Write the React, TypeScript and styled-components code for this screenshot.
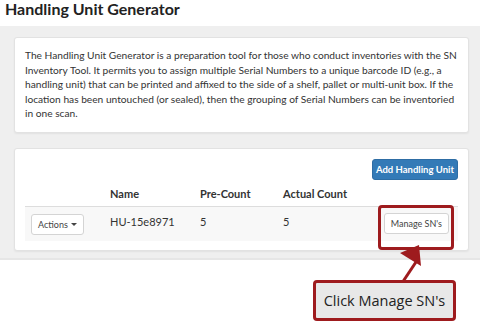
import styled, { createGlobalStyle } from 'styled-components';

const GlobalStyle = createGlobalStyle`
  body {
    margin: 0;
    background: #fff;
    font-family: Lato, 'Liberation Sans', sans-serif;
    color: #333;
  }
`;

const rows = [{ name: 'HU-15e8971', preCount: 5, actualCount: 5 }];

const App = () => {
  return (
    <Page>
      <GlobalStyle />
      <Title>Handling Unit Generator</Title>
      <Well>
        <Card>
          <Intro>
            The Handling Unit Generator is a preparation tool for those who conduct inventories with the SN
            <br />
            Inventory Tool. It permits you to assign multiple Serial Numbers to a unique barcode ID (e.g., a
            <br />
            handling unit) that can be printed and affixed to the side of a shelf, pallet or multi-unit box. If the
            <br />
            location has been untouched (or sealed), then the grouping of Serial Numbers can be inventoried
            <br />
            in one scan.
          </Intro>
        </Card>
        <Card $tight>
          <Toolbar>
            <PrimaryButton>Add Handling Unit</PrimaryButton>
          </Toolbar>
          <HeaderRow>
            <span />
            <HeadCell>Name</HeadCell>
            <HeadCell>Pre-Count</HeadCell>
            <HeadCell>Actual Count</HeadCell>
            <span />
          </HeaderRow>
          {rows.map((r) => (
            <Row key={r.name}>
              <Cell>
                <DefaultButton>
                  Actions <Caret />
                </DefaultButton>
              </Cell>
              <Cell>{r.name}</Cell>
              <Cell>{r.preCount}</Cell>
              <Cell>{r.actualCount}</Cell>
              <ManageCell>
                <Highlight>
                  <DefaultButton>Manage SN's</DefaultButton>
                  <Ring />
                </Highlight>
              </ManageCell>
            </Row>
          ))}
        </Card>
      </Well>
      <Arrow width="40" height="50" viewBox="0 0 40 50">
        <line x1="8" y1="46" x2="24" y2="22" stroke="#9e1b1e" strokeWidth="3" />
        <polygon points="27,5 8,13 29,26" fill="#9e1b1e" />
      </Arrow>
      <Callout>Click Manage SN's</Callout>
    </Page>
  );
};

export default App;

const Page = styled.div`
  position: relative;
  width: 480px;
  height: 322px;
  overflow: hidden;
  background: #fff;
`;

const Title = styled.h1`
  margin: 0;
  height: 26px;
  padding-left: 5px;
  font-size: 16px;
  line-height: 18px;
  font-weight: 700;
  color: #222;
`;

const Well = styled.div`
  display: flex;
  flex-direction: column;
  gap: 15px;
  background: #efefef;
  padding: 11px 11px 7px 14px;
  border-bottom: 2px solid #e6e6e6;
`;

const Card = styled.div<{ $tight?: boolean }>`
  background: #fff;
  border: 1px solid #e2e2e2;
  border-radius: 3px;
  box-shadow: 0 1px 2px rgba(0, 0, 0, 0.06);
  padding: ${(p) => (p.$tight ? '10px 10px 9px' : '10px 10px 11px')};
`;

const Intro = styled.p`
  margin: 0;
  font-size: 10.2px;
  line-height: 14.5px;
  white-space: nowrap;
  color: #333;
`;

const Toolbar = styled.div`
  display: flex;
  justify-content: flex-end;
`;

const PrimaryButton = styled.button`
  height: 21px;
  width: 86px;
  padding: 0;
  background: #337ab7;
  border: 1px solid #2e6da4;
  border-radius: 3px;
  color: #fff;
  font-family: inherit;
  font-size: 9.5px;
  font-weight: 700;
`;

const grid = `
  display: grid;
  grid-template-columns: 79px 90px 83px 90px 1fr;
`;

const HeaderRow = styled.div`
  ${grid}
  height: 27px;
  align-items: center;
  padding-top: 1px;
  border-bottom: 1px solid #dddddd;
  box-sizing: border-box;
`;

const HeadCell = styled.div`
  padding-left: 6px;
  font-size: 11px;
  font-weight: 700;
  color: #333;
`;

const Row = styled.div`
  ${grid}
  height: 34px;
  background: #f8f8f8;
`;

const Cell = styled.div`
  padding: 8px 6px 0;
  font-size: 11px;
  line-height: 14px;
  color: #333;
`;

const ManageCell = styled(Cell)`
  display: flex;
  justify-content: flex-end;
  padding: 7px 9px 0 0;
`;

const DefaultButton = styled.button`
  display: inline-flex;
  align-items: center;
  gap: 3px;
  height: 21px;
  margin-top: -1px;
  padding: 0 6px;
  background: #fff;
  border: 1px solid #d4d4d4;
  border-radius: 3px;
  font-family: inherit;
  font-size: 9px;
  color: #444;
`;

const Caret = styled.span`
  width: 0;
  height: 0;
  border-left: 3px solid transparent;
  border-right: 3px solid transparent;
  border-top: 3px solid #444;
`;

const Highlight = styled.div`
  position: relative;
  display: flex;
`;

const Ring = styled.div`
  position: absolute;
  top: -9px;
  bottom: -9px;
  left: -6px;
  right: -5px;
  border: 3px solid #9e1b1e;
  border-radius: 4px;
`;

const Arrow = styled.svg`
  position: absolute;
  left: 392px;
  top: 240px;
`;

const Callout = styled.div`
  position: absolute;
  left: 313px;
  top: 280px;
  width: 143px;
  height: 41px;
  box-sizing: border-box;
  display: flex;
  align-items: center;
  justify-content: center;
  background: #e8e8e8;
  border: 3px solid #9e1b1e;
  border-radius: 4px;
  font-family: 'Open Sans', sans-serif;
  font-size: 14.5px;
  color: #222;
`;
